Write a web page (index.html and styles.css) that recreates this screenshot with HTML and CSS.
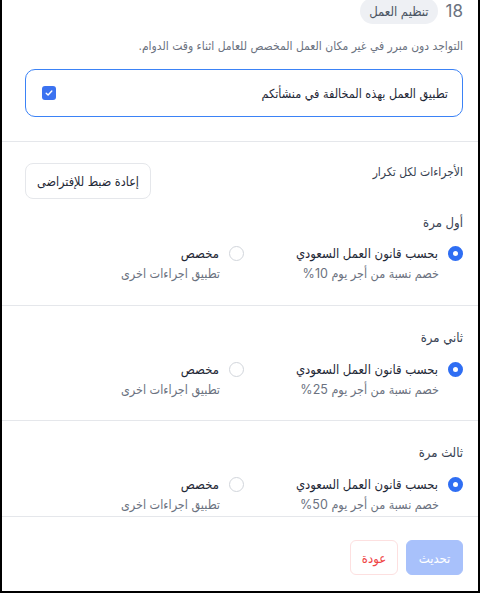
FILE: index.html
```html
<!DOCTYPE html>
<html lang="ar" dir="rtl">
<head>
  <meta charset="UTF-8" />
  <title>تنظيم العمل</title>
  <link rel="stylesheet" href="styles.css">
</head>
<body>
  <div class="frame">
    <div class="scroll">
      <div class="content">

        <div class="head">
          <span class="head-num">18</span>
          <span class="head-tag">تنظيم العمل</span>
        </div>
        <p class="head-desc">التواجد دون مبرر في غير مكان العمل المخصص للعامل اثناء وقت الدوام.</p>

        <label class="apply-box">
          <span class="apply-text">تطبيق العمل بهذه المخالفة في منشأتكم</span>
          <span class="check">
            <svg width="10" height="10" viewBox="0 0 10 10"><path d="M2.2 5.2 L4.1 7 L7.8 3" fill="none" stroke="#fff" stroke-width="1.4" stroke-linecap="round" stroke-linejoin="round"/></svg>
          </span>
        </label>
      </div>

      <div class="rules">
        <div class="rules-head">
          <span class="rules-title">الأجراءات لكل تكرار</span>
          <button class="btn-reset">إعادة ضبط للإفتراضى</button>
        </div>

        <div class="rule first">
          <div class="rule-title">أول مرة</div>
          <div class="rule-opts">
            <div class="opt">
              <div class="opt-row"><span class="radio on"></span><span class="opt-label">بحسب قانون العمل السعودي</span></div>
              <div class="opt-sub">خصم نسبة من أجر يوم 10%</div>
            </div>
            <div class="opt">
              <div class="opt-row"><span class="radio"></span><span class="opt-label">مخصص</span></div>
              <div class="opt-sub">تطبيق اجراءات اخرى</div>
            </div>
          </div>
        </div>

        <div class="rule">
          <div class="rule-title">ثاني مرة</div>
          <div class="rule-opts">
            <div class="opt">
              <div class="opt-row"><span class="radio on"></span><span class="opt-label">بحسب قانون العمل السعودي</span></div>
              <div class="opt-sub">خصم نسبة من أجر يوم 25%</div>
            </div>
            <div class="opt">
              <div class="opt-row"><span class="radio"></span><span class="opt-label">مخصص</span></div>
              <div class="opt-sub">تطبيق اجراءات اخرى</div>
            </div>
          </div>
        </div>

        <div class="rule">
          <div class="rule-title">ثالث مرة</div>
          <div class="rule-opts">
            <div class="opt">
              <div class="opt-row"><span class="radio on"></span><span class="opt-label">بحسب قانون العمل السعودي</span></div>
              <div class="opt-sub">خصم نسبة من أجر يوم 50%</div>
            </div>
            <div class="opt">
              <div class="opt-row"><span class="radio"></span><span class="opt-label">مخصص</span></div>
              <div class="opt-sub">تطبيق اجراءات اخرى</div>
            </div>
          </div>
        </div>
      </div>
    </div>

    <div class="foot">
      <button class="btn-save">تحديث</button>
      <button class="btn-back">عودة</button>
    </div>
  </div>
</body>
</html>
```

FILE: styles.css
```css
* {
  box-sizing: border-box;
}
body {
  margin: 0;
  background: #000;
  font-family: Inter, "DejaVu Sans Condensed", "DejaVu Sans", sans-serif;
  font-stretch: condensed;
  color: #374151;
}

.frame {
  width: 480px;
  height: 593px;
  background: #fff;
  border: 2px solid #000;
  border-top: none;
  display: flex;
  flex-direction: column;
}

.scroll {
  height: 517px;
  overflow: hidden;
  border-bottom: 1px solid #e5e7eb;
}

.content {
  padding: 0 15px 24px 23px;
  border-bottom: 1px solid #e5e7eb;
}

.head {
  display: flex;
  align-items: center;
  gap: 8px;
  margin-top: -2px;
  height: 26px;
}
.head-num {
  font-size: 17px;
  color: #6b7280;
}
.head-tag {
  background: #eef0f4;
  color: #4b5563;
  font-size: 13px;
  padding: 4px 9px;
  border-radius: 13px;
  line-height: 18px;
}
.head-desc {
  margin: 12px 0 0;
  font-family: "DejaVu Sans Condensed", "DejaVu Sans", sans-serif;
  font-size: 12px;
  line-height: 20px;
  color: #6b7280;
}

.apply-box {
  display: flex;
  align-items: center;
  justify-content: space-between;
  height: 48px;
  margin-top: 13px;
  padding: 0 14px 0 16px;
  border: 1px solid #3b82f6;
  border-radius: 10px;
}
.apply-text {
  font-size: 12.5px;
  color: #1f2937;
}
.check {
  width: 14px;
  height: 14px;
  border-radius: 3px;
  background: #3b72f0;
  display: flex;
  align-items: center;
  justify-content: center;
}

.rules {
  padding: 0 15px 0 23px;
}
.rules-head {
  display: flex;
  align-items: flex-start;
  justify-content: space-between;
  padding-top: 21px;
}
.rules-title {
  font-size: 12px;
  line-height: 20px;
  margin-top: -1px;
  color: #374151;
}
.btn-reset {
  font-family: inherit;
  font-stretch: inherit;
  font-size: 12.5px;
  color: #1f2937;
  background: #fff;
  border: 1px solid #e5e7eb;
  border-radius: 8px;
  height: 36px;
  padding: 0 11px;
}

.rule {
  padding: 21px 0 21px;
  border-bottom: 1px solid #e5e7eb;
  margin: 0 -15px 0 -23px;
  padding-left: 23px;
  padding-right: 15px;
}
.rule.first {
  padding-top: 13px;
  padding-bottom: 22px;
}
.rule-title {
  font-size: 13px;
  line-height: 20px;
  color: #374151;
}
.rule-opts {
  display: grid;
  grid-template-columns: 1fr 1fr;
  margin-top: 12px;
}
.first .rule-opts {
  margin-top: 11px;
}
.opt-row {
  display: flex;
  align-items: center;
  gap: 10px;
  height: 20px;
}
.opt-label {
  font-size: 13px;
  color: #1f2937;
}
.opt-sub {
  margin-top: 2px;
  padding-right: 24px;
  font-size: 12.5px;
  line-height: 18px;
  color: #6b7280;
}
.radio {
  width: 15px;
  height: 15px;
  border-radius: 50%;
  border: 1px solid #d1d5db;
  background: #fff;
  flex: none;
}
.radio.on {
  border: 5px solid #2f6ef3;
}

.foot {
  display: flex;
  gap: 8px;
  padding: 23px 15px 0 23px;
}
.btn-save,
.btn-back {
  font-family: inherit;
  font-stretch: inherit;
  font-size: 13px;
  height: 35px;
  border-radius: 6px;
}
.btn-save {
  width: 57px;
  background: #a8c1fb;
  color: #fff;
  border: 1px solid #a8c1fb;
}
.btn-back {
  width: 48px;
  background: #fff;
  color: #ef4444;
  border: 1px solid #fde0e0;
}
```
